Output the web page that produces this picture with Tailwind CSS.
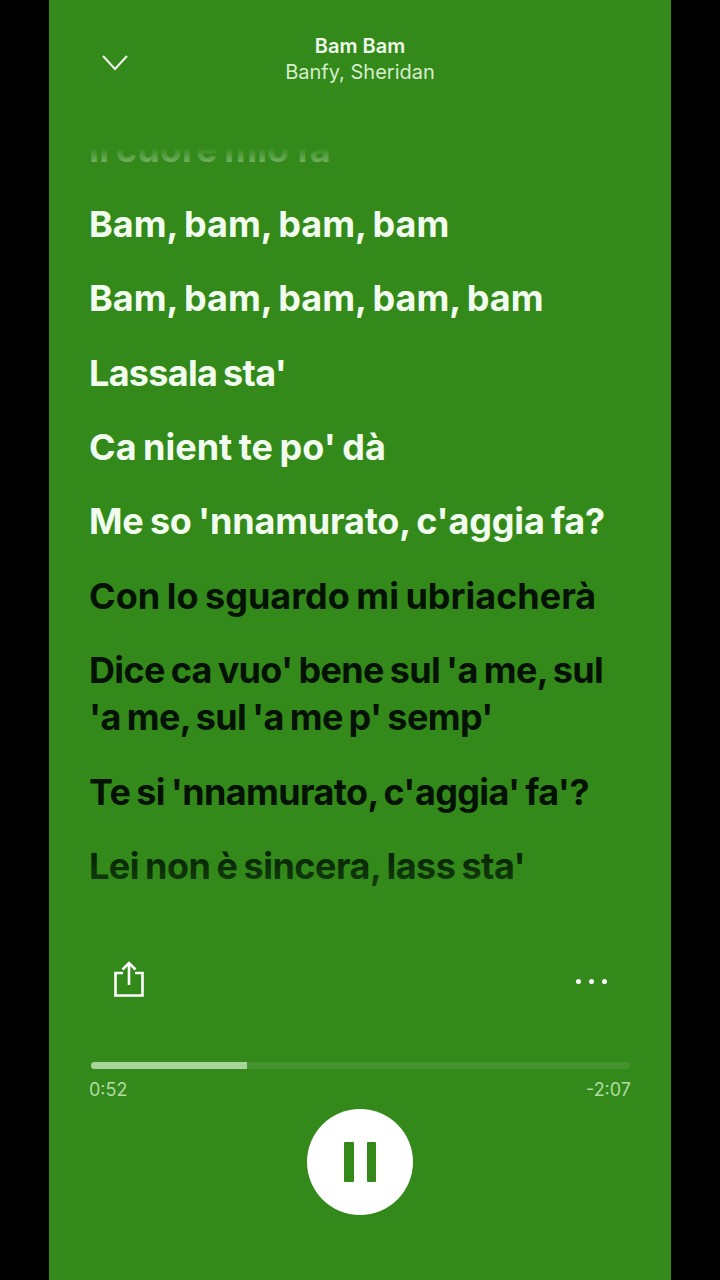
<!DOCTYPE html>
<html lang="en">
<head>
  <meta charset="UTF-8" />
  <meta name="viewport" content="width=device-width, initial-scale=1.0"/>
  <title>Bam Bam</title>
  <script src="https://cdn.jsdelivr.net/npm/@tailwindcss/browser@4"></script>
</head>
<body class="bg-black font-['Inter',sans-serif]">
  <div class="mx-auto w-[622px] h-[1280px] bg-[#338a1a] flex flex-col overflow-hidden">

    <!-- header -->
    <div class="relative h-[126px] pt-[34px] text-center text-[#eef8ea]">
      <svg class="absolute left-[52px] top-[54px]" width="28" height="18" viewBox="0 0 28 18" fill="none" stroke="#eef8ea" stroke-width="2">
        <path d="M2 2l12 13L26 2"/>
      </svg>
      <p class="text-[20px] leading-[24px] font-semibold">Bam Bam</p>
      <p class="text-[20px] leading-[28px] text-[#d6edcd]">Banfy, Sheridan</p>
    </div>

    <!-- lyrics -->
    <div class="relative h-[774px] overflow-hidden pl-[40px] pr-[10px] text-[36px] leading-[47px] font-bold [word-spacing:-2px]">
      <div class="flex flex-col gap-[27.4px] pt-[0.4px]">
        <p class="text-white tracking-[0.15px]">Il cuore mio fa</p>
        <p class="text-[#f2fcee] tracking-[0px]">Bam, bam, bam, bam</p>
        <p class="text-[#f2fcee] tracking-[0px]">Bam, bam, bam, bam, bam</p>
        <p class="text-[#f2fcee] tracking-[-0.7px]">Lassala sta'</p>
        <p class="text-[#f2fcee] tracking-[0px]">Ca nient te po' dà</p>
        <p class="text-[#f2fcee] tracking-[-0.2px]">Me so 'nnamurato, c'aggia fa?</p>
        <p class="text-[#041204] tracking-[0px]">Con lo sguardo mi ubriacherà</p>
        <p class="text-[#041204] tracking-[-0.65px]">Dice ca vuo' bene sul 'a me, sul<br>'a me, sul 'a me p' semp'</p>
        <p class="text-[#041204] tracking-[-0.65px]">Te si 'nnamurato, c'aggia' fa'?</p>
        <p class="text-[#062006] tracking-[-0.5px]">Lei non è sincera, lass sta'</p>
      </div>
      <div class="absolute inset-x-0 top-0 h-[40px] bg-gradient-to-b from-[#338a1a] from-55% to-[#338a1a]/60"></div>
      <div class="absolute inset-x-0 bottom-0 h-[50px] bg-gradient-to-b from-[#338a1a]/0 to-[#338a1a]/40"></div>
    </div>

    <!-- actions -->
    <div class="h-[162px] px-[64px] pt-[61px] flex justify-between items-start">
      <svg class="-mt-[1px]" width="32" height="38" viewBox="0 0 32 38" fill="none" stroke="#ffffff" stroke-width="2.6">
        <path d="M10 13H2.5v22.5h27V13H22"/>
        <path d="M16 3v22"/>
        <path d="M9.5 9.5L16 3l6.5 6.5"/>
      </svg>
      <div class="mt-[18px] flex gap-[8px]">
        <span class="w-[5px] h-[5px] rounded-full bg-white"></span>
        <span class="w-[5px] h-[5px] rounded-full bg-white"></span>
        <span class="w-[5px] h-[5px] rounded-full bg-white"></span>
      </div>
    </div>

    <!-- progress -->
    <div class="pl-[42px] pr-[41px]">
      <div class="h-[7px] rounded-full bg-[#45932e] overflow-hidden">
        <div class="w-[156px] h-full bg-[#a8d69a]"></div>
      </div>
      <div class="mt-[10px] -ml-[2px] -mr-[1px] flex justify-between text-[18px] leading-[22px] text-[#b0dba3]">
        <span>0:52</span>
        <span>-2:07</span>
      </div>
    </div>

    <!-- pause -->
    <div class="mt-[8px] flex justify-center">
      <div class="w-[106px] h-[106px] rounded-full bg-white flex items-center justify-center gap-[13px]">
        <span class="w-[9.5px] h-[40px] rounded-[1px] bg-[#338a1a]"></span>
        <span class="w-[9.5px] h-[40px] rounded-[1px] bg-[#338a1a]"></span>
      </div>
    </div>
  </div>
</body>
</html>
